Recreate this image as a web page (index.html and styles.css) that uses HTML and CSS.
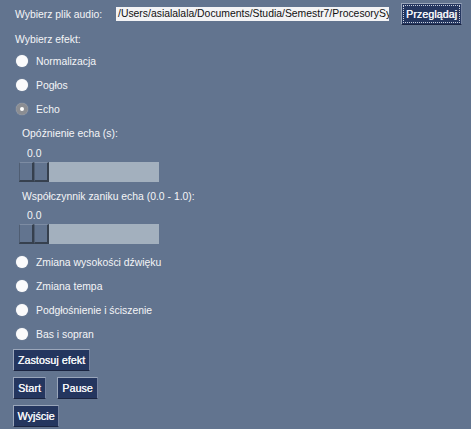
FILE: index.html
```html
<!DOCTYPE html>
<html>
<head>
<meta charset="utf-8">
<link rel="stylesheet" href="styles.css">
</head>
<body>
<div class="app">
  <div class="file-row">
    <span class="file-label">Wybierz plik audio:</span>
    <div class="entry"><span>/Users/asialalala/Documents/Studia/Semestr7/ProcesorySy</span></div>
    <button class="btn btn-browse"><span class="focus">Przeglądaj</span></button>
  </div>
  <div class="heading">Wybierz efekt:</div>
  <div class="radio"><span class="dot"></span>Normalizacja</div>
  <div class="radio"><span class="dot"></span>Pogłos</div>
  <div class="radio"><span class="dot on"></span>Echo</div>
  <div class="param-label first">Opóźnienie echa (s):</div>
  <div class="param-value">0.0</div>
  <div class="slider"><span class="grip"></span><span class="grip"></span></div>
  <div class="param-label second">Współczynnik zaniku echa (0.0 - 1.0):</div>
  <div class="param-value tight">0.0</div>
  <div class="slider"><span class="grip"></span><span class="grip"></span></div>
  <div class="radio gap"><span class="dot"></span>Zmiana wysokości dźwięku</div>
  <div class="radio"><span class="dot"></span>Zmiana tempa</div>
  <div class="radio"><span class="dot"></span>Podgłośnienie i ściszenie</div>
  <div class="radio"><span class="dot"></span>Bas i sopran</div>
  <div class="btn-row first-btn"><button class="btn btn-apply">Zastosuj efekt</button></div>
  <div class="btn-row"><button class="btn btn-start">Start</button><button class="btn btn-pause">Pause</button></div>
  <div class="btn-row"><button class="btn btn-exit">Wyjście</button></div>
</div>
</body>
</html>
```
FILE: styles.css
```css
html, body {
  margin: 0;
  padding: 0;
  background: #62748f;
}
body {
  width: 471px;
  height: 429px;
  overflow: hidden;
  font-family: "Liberation Sans", Arial, sans-serif;
  font-size: 10.4px;
  color: #f4f5f7;
}
.app {
  display: flex;
  flex-direction: column;
  align-items: flex-start;
}
.file-row {
  display: flex;
  align-items: center;
  height: 28px;
  width: 100%;
}
.file-label {
  margin-left: 15px;
  width: 101px;
}
.entry {
  width: 273px;
  height: 14px;
  background: #f3f3f5;
  color: #111;
  overflow: hidden;
  white-space: nowrap;
  box-sizing: border-box;
  font-size: 10.4px;
  line-height: 14px;
  padding-left: 2px;
}
.btn {
  font-family: "Liberation Sans", Arial, sans-serif;
  font-size: 10.6px;
  font-weight: normal;
  text-shadow: 0.35px 0 0 #f4f5f8;
  color: #f4f5f8;
  background: #24365f;
  border: 1px solid #9aa6ba;
  border-right-color: #7583a0;
  border-bottom-color: #1a2440;
  padding: 0;
  height: 22px;
  box-sizing: border-box;
  letter-spacing: 0.1px;
  margin: 0;
  white-space: nowrap;
}
.btn-browse {
  margin-left: 12px;
  width: 61px;
  height: 22px;
  padding: 1px;
}
.btn-browse .focus {
  display: block;
  height: 18px;
  line-height: 17px;
  border: 1px dotted #c8cfdc;
  box-sizing: border-box;
}
.heading {
  margin-left: 15px;
  margin-top: 4px;
  line-height: 16px;
  height: 16px;
  margin-bottom: 1px;
}
.radio {
  display: flex;
  align-items: center;
  height: 24px;
  margin-left: 16px;
}
.radio.gap {
  margin-top: 6px;
}
.dot {
  width: 12px;
  height: 12px;
  border-radius: 50%;
  background: #fbfbfc;
  margin-right: 8px;
  box-shadow: 0 0 1px rgba(255,255,255,0.6);
  display: flex;
  align-items: center;
  justify-content: center;
}
.dot.on {
  background: #8b8d92;
}
.dot.on::after {
  content: "";
  width: 4px;
  height: 4px;
  border-radius: 50%;
  background: #ffffff;
}
.param-label {
  margin-left: 22px;
  line-height: 16px;
  height: 16px;
}
.param-label.first {
  margin-top: 5px;
}
.param-label.second {
  margin-top: 7px;
}
.param-value {
  margin-left: 27px;
  line-height: 16px;
  height: 16px;
  margin-top: 4px;
}
.param-value.tight {
  margin-top: 3px;
}
.slider {
  margin-left: 19px;
  width: 140px;
  height: 20px;
  background: #a3b0be;
  display: flex;
}
.grip {
  width: 15px;
  height: 20px;
  box-sizing: border-box;
  background: #62748f;
  border-top: 1px solid #7d8ca3;
  border-left: 1px solid #4f5d72;
  border-right: 2px solid #36404e;
  border-bottom: 2px solid #36404e;
}
.btn-row {
  display: flex;
  margin-left: 13px;
  margin-top: 6px;
  gap: 11px;
}
.btn-row.first-btn {
  margin-top: 3px;
}
.btn-apply { width: 77px; }
.btn-start { width: 33px; }
.btn-pause { width: 41px; }
.btn-exit { width: 46px; }
```
